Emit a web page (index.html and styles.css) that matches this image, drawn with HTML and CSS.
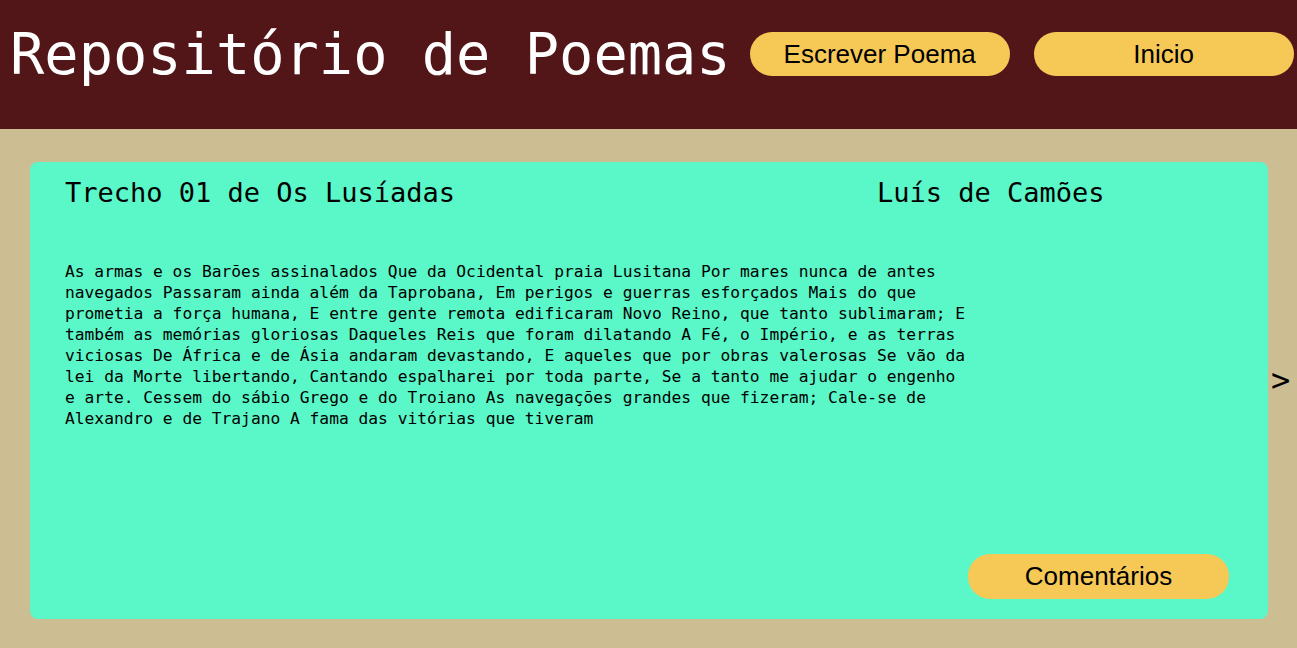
FILE: index.html
```html
<!DOCTYPE html>
<html lang="pt">
<head>
<meta charset="utf-8">
<title>Repositório de Poemas</title>
<link rel="stylesheet" href="styles.css">
</head>
<body>
<header class="topbar">
  <h1 class="site-title">Repositório de Poemas</h1>
  <nav class="nav">
    <button class="pill">Escrever Poema</button>
    <button class="pill">Inicio</button>
  </nav>
</header>
<main class="main">
  <article class="card">
    <div class="card-head">
      <h2 class="card-title">Trecho 01 de Os Lusíadas</h2>
      <h2 class="card-author">Luís de Camões</h2>
    </div>
    <p class="poem">As armas e os Barões assinalados Que da Ocidental praia Lusitana Por mares nunca de antes navegados Passaram ainda além da Taprobana, Em perigos e guerras esforçados Mais do que prometia a força humana, E entre gente remota edificaram Novo Reino, que tanto sublimaram; E também as memórias gloriosas Daqueles Reis que foram dilatando A Fé, o Império, e as terras viciosas De África e de Ásia andaram devastando, E aqueles que por obras valerosas Se vão da lei da Morte libertando, Cantando espalharei por toda parte, Se a tanto me ajudar o engenho e arte. Cessem do sábio Grego e do Troiano As navegações grandes que fizeram; Cale-se de Alexandro e de Trajano A fama das vitórias que tiveram</p>
    <button class="pill pill-comments">Comentários</button>
  </article>
  <span class="next">&gt;</span>
</main>
</body>
</html>
```
FILE: styles.css
```css
html, body {
  margin: 0;
  padding: 0;
}
body {
  background: #cdbd92;
  font-family: "DejaVu Sans Mono", monospace;
  color: #000;
  height: 648px;
  overflow: hidden;
}
.topbar {
  background: #521618;
  height: 108px;
  padding: 0 3px 21px 10px;
  display: flex;
  align-items: center;
  gap: 19px;
}
.site-title {
  margin: 0;
  font-family: "DejaVu Sans Mono", monospace;
  font-weight: normal;
  font-size: 57px;
  line-height: 66px;
  color: #fff;
  white-space: nowrap;
}
.nav {
  display: flex;
  gap: 24px;
}
.pill {
  width: 260px;
  height: 44px;
  border: none;
  border-radius: 22px;
  background: #f6c957;
  color: #000;
  font-family: "Liberation Sans", Arial, sans-serif;
  font-size: 26px;
  padding: 0;
  cursor: pointer;
}
.main {
  display: flex;
  align-items: center;
  padding: 33px 0 0 30px;
}
.card {
  width: 1238px;
  height: 457px;
  box-sizing: border-box;
  background: #5af7c8;
  border-radius: 8px;
  padding: 15px 39px 20px 35px;
  display: flex;
  flex-direction: column;
}
.card-head {
  display: grid;
  grid-template-columns: 812px 1fr;
}
.card-title, .card-author {
  margin: 0;
  font-weight: normal;
  font-size: 27px;
  line-height: 32px;
  white-space: nowrap;
}
.poem {
  margin: 52px 0 0 0;
  width: 902px;
  font-size: 16.25px;
  line-height: 21px;
}
.pill-comments {
  margin-top: auto;
  align-self: flex-end;
  width: 261px;
  height: 45px;
}
.next {
  margin-left: 3px;
  margin-bottom: 22px;
  font-size: 32px;
  line-height: 32px;
}
```
